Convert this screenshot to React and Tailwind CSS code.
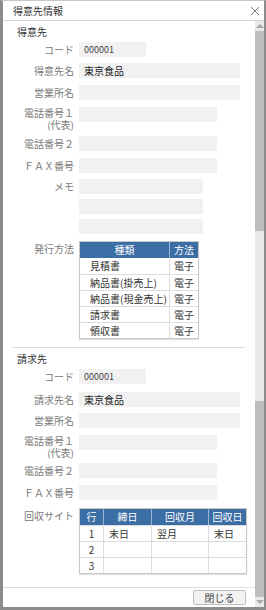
import React from 'react';

const font = { fontFamily: '"Noto Sans CJK JP", "Noto Sans", sans-serif' };

function Field({ label, sub, value, w = 'w-[161px]', mt = 'mt-[7px]', small }) {
  return (
    <div className={`flex ${mt}`}>
      <div
        className={`w-[71px] shrink-0 text-right text-[10px] text-[#7a7a7a] ${
          sub ? 'leading-[12px]' : 'leading-[15px]'
        }`}
      >
        <div>{label}</div>
        {sub && <div>{sub}</div>}
      </div>
      <div
        className={`ml-[5px] h-[15px] ${w} bg-[#f1f1f1] pl-[5px] leading-[15px] ${
          small ? 'text-[9px] text-[#444]' : 'text-[10px] text-[#222]'
        }`}
      >
        {value}
      </div>
    </div>
  );
}

function Blank({ w = 'w-[124px]', mt = 'mt-[5px]' }) {
  return (
    <div className={`flex ${mt}`}>
      <div className="w-[71px] shrink-0" />
      <div className={`ml-[5px] h-[15px] ${w} bg-[#f1f1f1]`} />
    </div>
  );
}

const docs = ['見積書', '納品書(掛売上)', '納品書(現金売上)', '請求書', '領収書'];

function Section1() {
  return (
    <div>
      <div className="pl-[14px] pt-[4px] text-[10px] leading-[13px] text-[#333]">得意先</div>
      <Field label="コード" value="000001" w="w-[67px]" mt="mt-[4px]" small />
      <Field label="得意先名" value="東京食品" mt="mt-[6px]" />
      <Field label="営業所名" />
      <Field label="電話番号１" sub="(代表)" w="w-[138px]" />
      <Field label="電話番号２" w="w-[138px]" mt="mt-[5px]" />
      <Field label="ＦＡＸ番号" w="w-[138px]" />
      <Field label="メモ" w="w-[124px]" mt="mt-[6px]" />
      <Blank />
      <Blank />
      <div className="mt-[7px] flex">
        <div className="w-[71px] shrink-0 text-right text-[10px] leading-[15px] text-[#7a7a7a]">発行方法</div>
        <div className="ml-[5px] w-[120px] border border-[#c8c8c8] text-[10px] shadow-[0_1px_1px_rgba(0,0,0,0.12)]">
          <div className="flex h-[16px] bg-[#3c6ea6] leading-[16px] text-white">
            <div className="w-[90px] border-r border-[#9bb6d4] text-center">種類</div>
            <div className="flex-1 text-center">方法</div>
          </div>
          {docs.map((d, i) => (
            <div key={d} className={`flex h-[16px] leading-[16px] text-[#333] ${i ? 'border-t border-[#dcdcdc]' : ''}`}>
              <div className="w-[90px] border-r border-[#dcdcdc] pl-[10px]">{d}</div>
              <div className="flex-1 pl-[4px]">電子</div>
            </div>
          ))}
        </div>
      </div>
    </div>
  );
}

function Section2() {
  const rows = [
    ['1', '末日', '翌月', '末日'],
    ['2', '', '', ''],
    ['3', '', '', ''],
  ];
  return (
    <div>
      <div className="pl-[14px] pt-[4px] text-[10px] leading-[13px] text-[#333]">請求先</div>
      <Field label="コード" value="000001" w="w-[67px]" mt="mt-[4px]" small />
      <Field label="請求先名" value="東京食品" mt="mt-[8px]" />
      <Field label="営業所名" mt="mt-[6px]" />
      <Field label="電話番号１" sub="(代表)" w="w-[138px]" />
      <Field label="電話番号２" w="w-[138px]" mt="mt-[4px]" />
      <Field label="ＦＡＸ番号" w="w-[138px]" />
      <div className="mt-[8px] flex">
        <div className="w-[71px] shrink-0 text-right text-[10px] leading-[15px] text-[#7a7a7a]">回収サイト</div>
        <div className="ml-[5px] w-[168px] border border-[#c8c8c8] text-[10px] shadow-[0_1px_1px_rgba(0,0,0,0.12)]">
          <div className="flex h-[16px] bg-[#3c6ea6] leading-[16px] text-white">
            <div className="w-[24px] border-r border-[#9bb6d4] text-center">行</div>
            <div className="w-[48px] border-r border-[#9bb6d4] text-center">締日</div>
            <div className="w-[57px] border-r border-[#9bb6d4] text-center">回収月</div>
            <div className="flex-1 text-center">回収日</div>
          </div>
          {rows.map((r) => (
            <div key={r[0]} className="flex h-[16px] border-t border-[#dcdcdc] leading-[15px] text-[#333]">
              <div className="w-[24px] border-r border-[#dcdcdc] text-center">{r[0]}</div>
              <div className="w-[48px] border-r border-[#dcdcdc] pl-[5px]">{r[1]}</div>
              <div className="w-[57px] border-r border-[#dcdcdc] pl-[5px]">{r[2]}</div>
              <div className="flex-1 pl-[5px]">{r[3]}</div>
            </div>
          ))}
        </div>
      </div>
    </div>
  );
}

function ScrollBar() {
  return (
    <div className="flex w-[9px] shrink-0 flex-col bg-[#e9e9e9]">
      <div className="flex h-[10px] items-center justify-center">
        <div className="h-0 w-0 border-x-[4px] border-b-[4px] border-x-transparent border-b-[#a8a8a8]" />
      </div>
      <div className="h-[200px] bg-[#bdbdbd]" />
      <div className="h-[170px]" />
      <div className="flex-1 bg-[#bdbdbd]" />
      <div className="flex h-[10px] items-center justify-center">
        <div className="h-0 w-0 border-x-[4px] border-t-[4px] border-x-transparent border-t-[#a8a8a8]" />
      </div>
    </div>
  );
}

export default function App() {
  return (
    <div style={font} className="flex h-[610px] w-[266px] flex-col border-b-[3px] border-l-[3px] border-r-[2px] border-t border-[#8c8c8c] border-t-[#c8c8c8] bg-white">
      <div className="flex h-[20px] shrink-0 items-center justify-between border-b border-[#d4d4d4] pl-[10px] pr-[4px]">
        <span className="text-[10px] text-[#333]">得意先情報</span>
        <svg width="10" height="10" viewBox="0 0 10 10">
          <path d="M1 1L9 9M9 1L1 9" stroke="#777" strokeWidth="1" />
        </svg>
      </div>
      <div className="flex min-h-0 flex-1">
        <div className="flex min-w-0 flex-1 flex-col">
          <div className="flex-1 overflow-hidden">
            <Section1 />
            <div className="mx-[10px] mt-[8px] border-t border-[#dedede]" />
            <Section2 />
          </div>
          <div className="flex h-[20px] shrink-0 items-start justify-end border-t border-[#dedede] pr-[9px] pt-[2px]">
            <button className="h-[15px] w-[53px] rounded-[2px] border border-[#bdbdbd] bg-[#f2f2f2] text-[10px] leading-[13px] text-[#444]">
              閉じる
            </button>
          </div>
        </div>
        <ScrollBar />
      </div>
    </div>
  );
}
